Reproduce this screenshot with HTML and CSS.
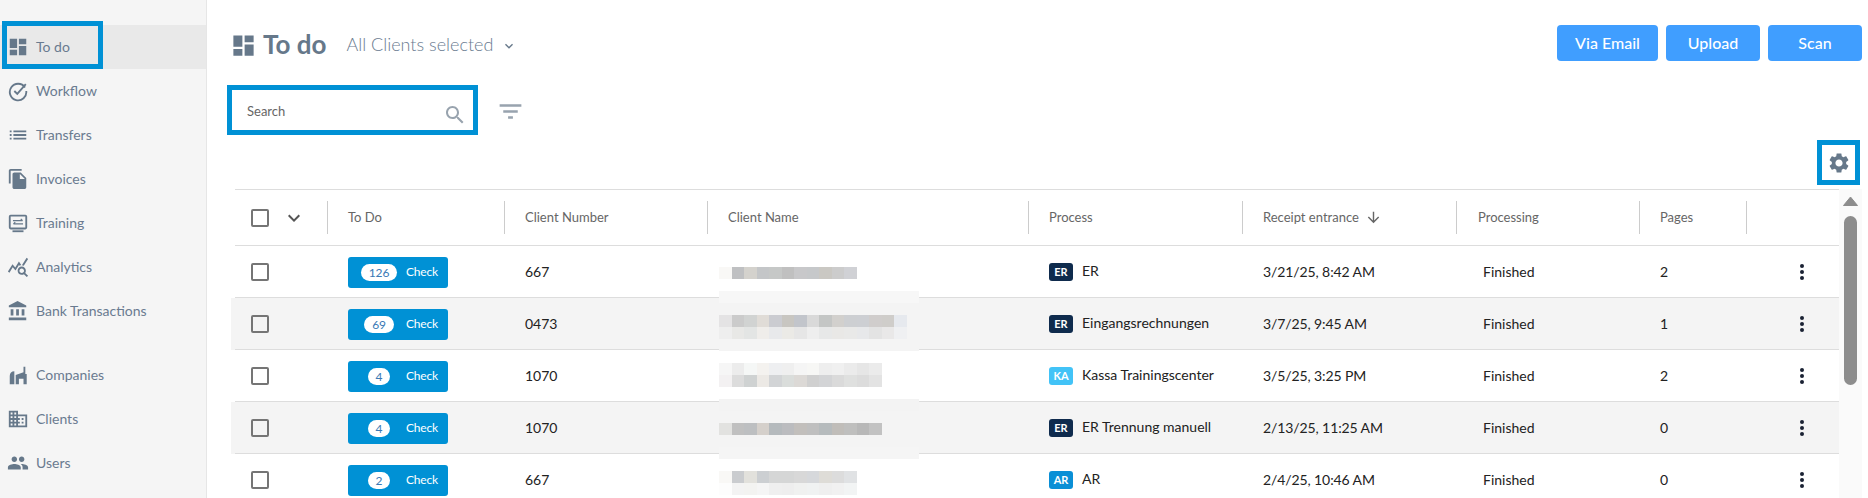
FILE: index.html
```html
<!DOCTYPE html>
<html lang="en">
<head>
<meta charset="utf-8">
<title>To do</title>
<link rel="stylesheet" href="styles.css">
</head>
<body>
<div class="app">
  <aside class="sidebar">
    <nav class="nav-group">
      <a class="nav-item active"><span class="focus-box"></span><svg class="nav-icon" viewBox="0 0 24 24"><path d="M3 13h8V3H3v10zm0 8h8v-6H3v6zm10 0h8V11h-8v10zm0-18v6h8V3h-8z"/></svg>To do</a>
      <a class="nav-item"><svg class="nav-icon line" viewBox="0 0 24 24"><path d="M19.6 8.2A9 9 0 1 0 21 12"/><path d="M8 12l3.2 3.2L20.5 4.5"/></svg>Workflow</a>
      <a class="nav-item"><svg class="nav-icon" viewBox="0 0 24 24"><path d="M3 13h2v-2H3v2zm0 4h2v-2H3v2zm0-8h2V7H3v2zm4 4h14v-2H7v2zm0 4h14v-2H7v2zM7 7v2h14V7H7z"/></svg>Transfers</a>
      <a class="nav-item"><svg class="nav-icon" viewBox="0 0 24 24"><path d="M16 1H4c-1.1 0-2 .9-2 2v14h2V3h12V1zm-1 4l6 6v10c0 1.1-.9 2-2 2H7.99C6.89 23 6 22.1 6 21l.01-14c0-1.1.89-2 1.99-2h7zm-1 7h5.500L14 6.500V12z"/></svg>Invoices</a>
      <a class="nav-item"><svg class="nav-icon line" viewBox="0 0 24 24"><rect x="3" y="4" width="18" height="14" rx="1"/><path d="M6 21h12"/><path class="thin" d="M6.500 9.500H17M15 7.500l2 2M17.500 13H7M9 11l-2 2"/></svg>Training</a>
      <a class="nav-item"><svg class="nav-icon" viewBox="0 0 24 24"><path d="M19.880 18.470c.44-.7.7-1.510.7-2.390 0-2.490-2.010-4.500-4.500-4.500s-4.500 2.010-4.500 4.500 2.010 4.500 4.490 4.500c.88 0 1.700-.26 2.390-.7L21.580 23 23 21.580l-3.120-3.110zm-3.800.11c-1.380 0-2.500-1.120-2.500-2.500s1.120-2.500 2.500-2.500 2.500 1.120 2.500 2.500-1.120 2.500-2.500 2.500zm-.36-8.500c-.74.02-1.450.18-2.100.45l-.55-.83-3.800 6.180-3.010-3.520-3.630 5.810L1 17l5-8 3 3.500L13 6l2.720 4.080zm2.590.5c-.64-.28-1.330-.45-2.050-.49L21.380 2 23 3.180l-4.690 7.400z"/></svg>Analytics</a>
      <a class="nav-item"><svg class="nav-icon" viewBox="0 0 24 24"><path d="M4 10v7h3v-7H4zm6 0v7h3v-7h-3zM2 22h19v-3H2v3zm14-12v7h3v-7h-3zm-4.500-9L2 6v2h19V6l-9.500-5z"/></svg>Bank Transactions</a>
    </nav>
    <nav class="nav-group">
      <a class="nav-item"><svg class="nav-icon" viewBox="0 0 24 24"><path d="M3 22V13c0-3 2-5 5-5v14H3zM9.500 22V12l8.500-3V3h2v8h1.500v11H18v-6h-5v6H9.500z"/></svg>Companies</a>
      <a class="nav-item"><svg class="nav-icon" viewBox="0 0 24 24"><path d="M12 7V3H2v18h20V7H12zM6 19H4v-2h2v2zm0-4H4v-2h2v2zm0-4H4V9h2v2zm0-4H4V5h2v2zm4 12H8v-2h2v2zm0-4H8v-2h2v2zm0-4H8V9h2v2zm0-4H8V5h2v2zm10 12h-8v-2h2v-2h-2v-2h2v-2h-2V9h8v10zm-2-8h-2v2h2v-2zm0 4h-2v2h2v-2z"/></svg>Clients</a>
      <a class="nav-item"><svg class="nav-icon" viewBox="0 0 24 24"><path d="M16 11c1.660 0 2.990-1.340 2.990-3S17.660 5 16 5c-1.660 0-3 1.340-3 3s1.340 3 3 3zm-8 0c1.660 0 2.990-1.340 2.990-3S9.660 5 8 5C6.340 5 5 6.340 5 8s1.340 3 3 3zm0 2c-2.330 0-7 1.170-7 3.500V19h14v-2.500c0-2.330-4.670-3.500-7-3.500zm8 0c-.29 0-.62.02-.97.05 1.160.84 1.970 1.970 1.970 3.450V19h6v-2.500c0-2.330-4.670-3.500-7-3.500z"/></svg>Users</a>
    </nav>
  </aside>

  <main class="main">
    <header class="page-head">
      <svg class="title-icon" viewBox="0 0 24 24"><path d="M3 13h8V3H3v10zm0 8h8v-6H3v6zm10 0h8V11h-8v10zm0-18v6h8V3h-8z"/></svg>
      <h1 class="title">To do</h1>
      <span class="client-select">All Clients selected</span>
      <svg class="select-chevron" viewBox="0 0 24 24"><path d="M7.410 8.590L12 13.170l4.590-4.580L18 10l-6 6-6-6z"/></svg>
      <div class="actions">
        <button class="btn btn-wide">Via Email</button>
        <button class="btn">Upload</button>
        <button class="btn">Scan</button>
      </div>
    </header>

    <div class="toolbar">
      <div class="search">
        <span class="search-label">Search</span>
        <svg class="search-icon" viewBox="0 0 24 24"><path d="M15.500 14h-.79l-.28-.27C15.410 12.590 16 11.110 16 9.500 16 5.910 13.090 3 9.500 3S3 5.910 3 9.500 5.910 16 9.500 16c1.610 0 3.090-.59 4.230-1.570l.27.28v.79l5 4.990L20.490 19l-4.990-5zm-6 0C7.010 14 5 11.990 5 9.500S7.010 5 9.500 5 14 7.010 14 9.500 11.990 14 9.500 14z"/></svg>
      </div>
      <svg class="filter-icon" viewBox="0 0 24 24"><path d="M10 18h4v-2h-4v2zM3 6v2h18V6H3zm3 7h12v-2H6v2z"/></svg>
    </div>

    <div class="settings-row">
      <div class="settings">
        <svg class="gear" viewBox="0 0 24 24"><path d="M19.140 12.940c.04-.3.06-.61.06-.94 0-.32-.02-.64-.07-.94l2.030-1.580c.18-.14.23-.41.12-.61l-1.920-3.320c-.12-.22-.37-.29-.59-.22l-2.390.96c-.5-.38-1.030-.7-1.620-.94l-.36-2.540c-.04-.24-.24-.41-.48-.41h-3.840c-.24 0-.43.17-.47.41l-.36 2.540c-.59.24-1.130.57-1.620.94l-2.390-.96c-.22-.08-.47 0-.59.22L2.740 8.870c-.12.21-.08.47.12.61l2.030 1.580c-.05.3-.09.63-.09.94s.02.64.07.94l-2.030 1.580c-.18.14-.23.41-.12.61l1.920 3.320c.12.22.37.29.59.22l2.390-.96c.5.38 1.030.7 1.620.94l.36 2.540c.05.24.24.41.48.41h3.840c.24 0 .44-.17.47-.41l.36-2.540c.59-.24 1.130-.56 1.620-.94l2.390.96c.22.08.47 0 .59-.22l1.920-3.320c.12-.22.07-.47-.12-.61l-2.010-1.580zM12 15.600c-1.980 0-3.600-1.620-3.600-3.600s1.620-3.600 3.600-3.600 3.600 1.620 3.600 3.600-1.620 3.600-3.600 3.600z"/></svg>
      </div>
    </div>

    <section class="table-wrap">
      <div class="table">
        <div class="row head">
          <div class="cell select"><span class="checkbox"></span><svg class="head-chevron" viewBox="0 0 24 24"><path d="M7.410 8.590L12 13.170l4.590-4.580L18 10l-6 6-6-6z"/></svg></div>
          <div class="cell">To Do</div>
          <div class="cell">Client Number</div>
          <div class="cell">Client Name</div>
          <div class="cell">Process</div>
          <div class="cell">Receipt entrance<svg class="sort" viewBox="0 0 24 24"><path d="M20 12l-1.410-1.410L13 16.170V4h-2v12.170l-5.580-5.590L4 12l8 8 8-8z"/></svg></div>
          <div class="cell processing">Processing</div>
          <div class="cell">Pages</div>
          <div class="cell"></div>
        </div>

        <div class="row">
          <div class="cell select"><span class="checkbox"></span></div>
          <div class="cell"><a class="check"><span class="pill-slot"><span class="pill">126</span></span>Check</a></div>
          <div class="cell">667</div>
          <div class="cell"></div>
          <div class="cell process"><span class="badge er">ER</span><span class="process-name">ER</span></div>
          <div class="cell date">3/21/25, 8:42 AM</div>
          <div class="cell status">Finished</div>
          <div class="cell">2</div>
          <div class="cell kebab-cell"><svg class="kebab" viewBox="0 0 6 18"><circle cx="3" cy="3" r="2"/><circle cx="3" cy="9" r="2"/><circle cx="3" cy="15" r="2"/></svg></div>
        </div>

        <div class="row">
          <div class="cell select"><span class="checkbox"></span></div>
          <div class="cell"><a class="check"><span class="pill-slot"><span class="pill">69</span></span>Check</a></div>
          <div class="cell">0473</div>
          <div class="cell"></div>
          <div class="cell process"><span class="badge er">ER</span><span class="process-name">Eingangsrechnungen</span></div>
          <div class="cell date">3/7/25, 9:45 AM</div>
          <div class="cell status">Finished</div>
          <div class="cell">1</div>
          <div class="cell kebab-cell"><svg class="kebab" viewBox="0 0 6 18"><circle cx="3" cy="3" r="2"/><circle cx="3" cy="9" r="2"/><circle cx="3" cy="15" r="2"/></svg></div>
        </div>

        <div class="row">
          <div class="cell select"><span class="checkbox"></span></div>
          <div class="cell"><a class="check"><span class="pill-slot"><span class="pill">4</span></span>Check</a></div>
          <div class="cell">1070</div>
          <div class="cell"></div>
          <div class="cell process"><span class="badge ka">KA</span><span class="process-name">Kassa Trainingscenter</span></div>
          <div class="cell date">3/5/25, 3:25 PM</div>
          <div class="cell status">Finished</div>
          <div class="cell">2</div>
          <div class="cell kebab-cell"><svg class="kebab" viewBox="0 0 6 18"><circle cx="3" cy="3" r="2"/><circle cx="3" cy="9" r="2"/><circle cx="3" cy="15" r="2"/></svg></div>
        </div>

        <div class="row">
          <div class="cell select"><span class="checkbox"></span></div>
          <div class="cell"><a class="check"><span class="pill-slot"><span class="pill">4</span></span>Check</a></div>
          <div class="cell">1070</div>
          <div class="cell"></div>
          <div class="cell process"><span class="badge er">ER</span><span class="process-name">ER Trennung manuell</span></div>
          <div class="cell date">2/13/25, 11:25 AM</div>
          <div class="cell status">Finished</div>
          <div class="cell">0</div>
          <div class="cell kebab-cell"><svg class="kebab" viewBox="0 0 6 18"><circle cx="3" cy="3" r="2"/><circle cx="3" cy="9" r="2"/><circle cx="3" cy="15" r="2"/></svg></div>
        </div>

        <div class="row">
          <div class="cell select"><span class="checkbox"></span></div>
          <div class="cell"><a class="check"><span class="pill-slot"><span class="pill">2</span></span>Check</a></div>
          <div class="cell">667</div>
          <div class="cell"></div>
          <div class="cell process"><span class="badge ar">AR</span><span class="process-name">AR</span></div>
          <div class="cell date">2/4/25, 10:46 AM</div>
          <div class="cell status">Finished</div>
          <div class="cell">0</div>
          <div class="cell kebab-cell"><svg class="kebab" viewBox="0 0 6 18"><circle cx="3" cy="3" r="2"/><circle cx="3" cy="9" r="2"/><circle cx="3" cy="15" r="2"/></svg></div>
        </div>

        <div class="mosaic">
          <i></i>
          <i class="r1"></i>
          <i></i>
          <i class="band b1"></i>
          <i></i>
          <i class="r2a"></i>
          <i class="r2b"></i>
          <i class="band b2"></i>
          <i></i>
          <i class="r3a"></i>
          <i class="r3b"></i>
          <i></i>
          <i class="band b3"></i>
          <i></i>
          <i class="r4"></i>
          <i></i>
          <i class="band b4"></i>
          <i></i>
          <i class="r5a"></i>
          <i class="r5b"></i>
        </div>
      </div>

      <div class="scrollbar">
        <svg class="scroll-arrow" viewBox="0 0 15 10"><path d="M7.500 1L14.500 9.500H.5z" stroke-linejoin="round"/></svg>
        <div class="scroll-thumb"></div>
      </div>
    </section>
  </main>
</div>
</body>
</html>
```

FILE: styles.css
```css
* { box-sizing: border-box; }

html, body {
  margin: 0;
  height: 498px;
  overflow: hidden;
  background: #fff;
  font-family: Lato, "Liberation Sans", sans-serif;
}

.app { display: flex; height: 498px; }

/* Sidebar */
.sidebar {
  width: 207px;
  flex: none;
  padding-top: 25px;
  background: #f5f5f5;
  border-right: 1px solid #e6e6e6;
  display: flex;
  flex-direction: column;
  gap: 20px;
}
.nav-item {
  position: relative;
  height: 44px;
  padding: 0 0 2px 7px;
  display: flex;
  align-items: center;
  gap: 7px;
  font-size: 14px;
  color: #6a7b90;
}
.nav-item.active { background: #e9e9e9; }
.nav-icon { width: 22px; height: 22px; margin-top: 2px; flex: none; fill: #66788a; }
.nav-icon.line { fill: none; stroke: #66788a; stroke-width: 2; }
.nav-icon .thin { stroke-width: 1.3; }
.focus-box {
  position: absolute;
  left: 2px;
  top: -4px;
  width: 101px;
  height: 48px;
  border: 5px solid #0091d5;
}

/* Main */
.main {
  flex: 1;
  min-width: 0;
  padding: 25px 6px 0 20px;
  display: flex;
  flex-direction: column;
}
.page-head {
  height: 36px;
  flex: none;
  padding-left: 3px;
  display: flex;
  align-items: center;
}
.title-icon { width: 27px; height: 27px; margin-top: 4px; fill: #66788a; }
.title {
  margin: 2px 20px 0 6px;
  font-size: 26px;
  font-weight: 700;
  color: #66788a;
}
.client-select { margin-top: 2px; font-size: 18px; font-weight: 300; color: #6a7b90; }
.select-chevron { width: 16px; height: 16px; margin: 6px 0 0 8px; fill: #66788a; }
.actions { margin-left: auto; display: flex; gap: 8px; }
.btn {
  width: 94px;
  height: 36px;
  padding: 0 0 2px;
  border: 0;
  border-radius: 4px;
  background: #409eff;
  color: #fff;
  font: 500 16px Lato, "Liberation Sans", sans-serif;
}
.btn-wide { width: 101px; }

.toolbar {
  margin-top: 24px;
  flex: none;
  display: flex;
  align-items: center;
}
.search {
  width: 251px;
  height: 50px;
  padding: 0 6px 0 15px;
  border: 5px solid #0091d5;
  display: flex;
  align-items: center;
  justify-content: space-between;
  font-size: 13px;
  color: #666;
}
.search-label { margin-top: 2px; }
.search-icon { width: 24px; height: 24px; margin-top: 9px; fill: #98a3ae; }
.filter-icon { width: 29px; height: 29px; margin: 2px 0 0 18px; fill: #98a3ae; }

.settings-row {
  margin-top: 5px;
  padding-right: 2px;
  flex: none;
  display: flex;
  justify-content: flex-end;
}
.settings {
  width: 43px;
  height: 45px;
  border: 5px solid #0091d5;
  display: flex;
  align-items: center;
  justify-content: center;
}
.gear { width: 24px; height: 24px; fill: #66788a; }

/* Table */
.table-wrap {
  margin: 4px 0 0 4px;
  flex: 1;
  min-height: 0;
  display: flex;
  overflow: hidden;
}
.table { position: relative; width: 1608px; flex: none; }
.row {
  height: 52px;
  display: grid;
  grid-template-columns: 97px 177px 203px 321px 214px 214px 183px 107px 92px;
  align-items: center;
  font-size: 14px;
  color: #222;
  background: linear-gradient(#ddd, #ddd) no-repeat 4px 100% / calc(100% - 4px) 1px;
}
.row:nth-child(odd):not(.head) { background-color: #f4f4f4; }
.row.head {
  height: 57px;
  font-size: 13px;
  color: #666;
  background:
    linear-gradient(#ddd, #ddd) no-repeat 4px 0 / calc(100% - 4px) 1px,
    linear-gradient(#ddd, #ddd) no-repeat 4px 100% / calc(100% - 4px) 1px;
}
.cell { padding: 0 0 2px 20px; display: flex; align-items: center; }
.head .cell { height: 33px; border-right: 1px solid #ccc; }
.head .cell:last-child { border-right: 0; }
.head .processing { padding-left: 21px; }
.head-chevron { width: 24px; height: 24px; margin: 2px 0 0 13px; fill: #555; }
.sort { width: 17px; height: 17px; margin: 2px 0 0 6px; fill: #666; }
.checkbox {
  width: 18px;
  height: 18px;
  margin-top: 2px;
  flex: none;
  border: 2px solid #757575;
  border-radius: 2px;
}
.date { letter-spacing: -0.1px; }
.check {
  width: 100px;
  height: 31px;
  margin-top: 2px;
  padding-bottom: 2px;
  border-radius: 3px;
  background: #0091d5;
  color: #fff;
  font-size: 12px;
  letter-spacing: -0.2px;
  display: flex;
  align-items: center;
}
.pill-slot { width: 58px; margin-top: 2px; display: flex; justify-content: center; padding-left: 4px; }
.pill {
  height: 17px;
  min-width: 22px;
  padding: 0 8px;
  border-radius: 9px;
  background: #fff;
  color: #3a79b5;
  line-height: 17px;
  text-align: center;
}
.process-name { margin: 0 0 2px 9px; }
.badge {
  width: 24px;
  height: 18px;
  margin-top: 2px;
  border-radius: 3px;
  color: #fff;
  font-size: 11px;
  font-weight: 700;
  line-height: 18px;
  text-align: center;
}
.badge.er { background: #0f2b4d; }
.badge.ka { background: #42c3f7; }
.badge.ar { background: #0a8fd6; }
.cell.status { padding-left: 26px; }
.cell.kebab-cell { padding-left: 52px; }
.kebab { width: 6px; height: 18px; margin-top: 2px; fill: #1a2233; }

/* Redacted client names: pixelated cover over the name column */
.mosaic {
  position: absolute;
  left: 488px;
  top: 66px;
  width: 200px;
  display: flex;
  flex-direction: column;
}
.mosaic i { display: block; height: 12px; background-repeat: no-repeat; }
.mosaic .b1 { background: #f7f7f7; }
.mosaic .b2 { background: #f4f4f4; }
.mosaic .b3 { background: #f3f3f3; }
.mosaic .b4 { background: #f5f5f5; }
.mosaic .r1 {
  background-image: linear-gradient(90deg, #f9f8f6 13px, #bfc0c2 13px 25px, #d4d2cd 25px 38px, #c4c6c8 38px 50px, #c6c8c7 50px 63px, #c0c0c0 63px 75px, #c8c8ca 75px 88px, #c6c8ca 88px 100px, #cac8c3 100px 113px, #cccccc 113px 125px, #d0d1d5 125px 138px, transparent 138px);
}
.mosaic .r2a {
  background-image: linear-gradient(90deg, #e4e3e4 13px, #cbcbcb 13px 25px, #d1d3d2 25px 38px, #e0dcd7 38px 50px, #cbccd1 50px 63px, #c8c6c1 63px 75px, #c2c5cb 75px 88px, #d9d9d9 88px 100px, #c4c6c5 100px 113px, #d2d0cd 113px 125px, #cdcfd2 125px 138px, #cdcfd3 138px 150px, #d0cdcc 150px 163px, #cfcdca 163px 175px, #e6e9ee 175px 188px, #f4f4f4 188px);
}
.mosaic .r2b {
  background-image: linear-gradient(90deg, #eeeeee 13px, #e8e8e6 13px 25px, #e3e5e4 25px 38px, #efedea 38px 50px, #e8e9eb 50px 63px, #ebeae6 63px 75px, #e6e6e6 75px 88px, #eeeeee 88px 100px, #e7e8e8 100px 113px, #e9e8e6 113px 125px, #e9e9e8 125px 138px, #e7e8ea 138px 150px, #e3e3e3 150px 163px, #e9e8e8 163px 175px, #eff0f2 175px 188px, #f4f4f4 188px);
}
.mosaic .r3a {
  background-image: linear-gradient(90deg, #f6f6f6 13px, #ececec 13px 25px, #f5f7f6 25px 38px, #f4f2ef 38px 50px, #eeeff1 50px 63px, #efefef 63px 75px, #f5f5f5 75px 88px, #f7f7f5 88px 100px, #eeeeee 100px 113px, #f0f0f0 113px 125px, #ebebeb 125px 138px, #e6e6e6 138px 150px, #ebebeb 150px 163px, transparent 163px);
}
.mosaic .r3b {
  background-image: linear-gradient(90deg, #f3f1f2 13px, #dcdcdc 13px 25px, #cfd2d2 25px 38px, #ece9e5 38px 50px, #d2d4d6 50px 63px, #dadddb 63px 75px, #dcd9d6 75px 88px, #d0d0d0 88px 100px, #d3d4d6 100px 113px, #dadada 113px 125px, #dfe0df 125px 138px, #dcdcdc 138px 150px, #e3e3e3 150px 163px, transparent 163px);
}
.mosaic .r4 {
  background-image: linear-gradient(90deg, #e2e2e0 13px, #c0c0c0 13px 25px, #bdbfc1 25px 38px, #d5d0cb 38px 50px, #b5babd 50px 63px, #bbbcbf 63px 75px, #c2bfbc 75px 88px, #bfbfbf 88px 100px, #b6bbbd 100px 113px, #c0bdb9 113px 125px, #bfbfbe 125px 138px, #b8b8b8 138px 150px, #c2c2c2 150px 163px, transparent 163px);
}
.mosaic .r5a {
  background-image: linear-gradient(90deg, #f9f8f6 13px, #cacccf 13px 25px, #e2e1dc 25px 38px, #cccfd2 38px 50px, #d5d6d6 50px 63px, #d5d6d6 63px 75px, #d8d8d8 75px 88px, #d6d8db 88px 100px, #dedcd7 100px 113px, #dcdcdc 113px 125px, #e0e2e4 125px 138px, transparent 138px);
}
.mosaic .r5b {
  background-image: linear-gradient(90deg, #fdfdfd 13px, #f3f3f3 13px 25px, #f3f3f1 25px 38px, #f5f5f5 38px 50px, #efefef 50px 63px, #eeeeee 63px 75px, #f0f1f0 75px 88px, #f0f2f2 88px 100px, #efefef 100px 113px, #f1f1f1 113px 125px, #f2f4f4 125px 138px, transparent 138px);
}

/* Scrollbar */
.scrollbar {
  width: 23px;
  flex: none;
  padding-top: 7px;
  background: #fafafa;
  display: flex;
  flex-direction: column;
  align-items: center;
}
.scroll-arrow { width: 15px; height: 10px; fill: #8d8d8d; stroke: #8d8d8d; }
.scroll-thumb {
  width: 13px;
  height: 169px;
  margin-top: 10px;
  border-radius: 7px;
  background: #8d8d8d;
}
```
